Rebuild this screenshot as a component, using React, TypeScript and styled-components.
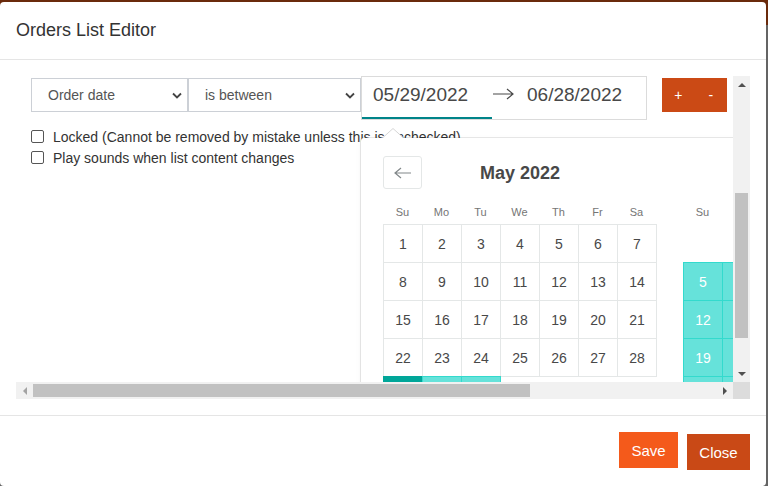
import React from 'react';
import styled, { createGlobalStyle } from 'styled-components';

const GlobalStyle = createGlobalStyle`
  html, body { margin: 0; padding: 0; }
  body {
    width: 768px;
    height: 486px;
    overflow: hidden;
    background: linear-gradient(#6a2a0c 0, #6a2a0c 25px, #646464 25px);
    font-family: "Liberation Sans", Arial, sans-serif;
  }
`;

const Page = styled.div`
  padding-top: 2px;
`;

const Modal = styled.div`
  width: 766px;
  height: 484px;
  background: #fff;
  border-radius: 4px;
  display: flex;
  flex-direction: column;
`;

const Header = styled.div`
  height: 59px;
  padding: 0 16px;
  display: flex;
  align-items: center;
  border-bottom: 1px solid #e5e5e5;
  font-size: 18px;
  color: #333;
`;

const Body = styled.div`
  padding: 16px;
  border-bottom: 1px solid #e5e5e5;
`;

const ScrollFrame = styled.div`
  display: grid;
  grid-template-columns: 717px 17px;
  grid-template-rows: 306px 17px;
`;

const Viewport = styled.div`
  overflow: hidden;
  position: relative;
  padding-left: 15px;
`;

const VBar = styled.div`
  background: #f1f1f1;
  display: flex;
  flex-direction: column;
`;

const HBar = styled.div`
  background: #f1f1f1;
  display: flex;
`;

const Corner = styled.div`
  background: #dcdcdc;
`;

const ArrowBtn = styled.div`
  width: 17px;
  height: 17px;
  flex-shrink: 0;
  display: flex;
  align-items: center;
  justify-content: center;
`;

const Tri = styled.span<{ $dir: 'up' | 'down' | 'left' | 'right'; $muted?: boolean }>`
  width: 0;
  height: 0;
  ${({ $dir, $muted }) => {
    const c = $muted ? '#a3a3a3' : '#505050';
    if ($dir === 'up') return `border-left: 4px solid transparent; border-right: 4px solid transparent; border-bottom: 4px solid ${c};`;
    if ($dir === 'down') return `border-left: 4px solid transparent; border-right: 4px solid transparent; border-top: 4px solid ${c};`;
    if ($dir === 'left') return `border-top: 4px solid transparent; border-bottom: 4px solid transparent; border-right: 4px solid ${c};`;
    return `border-top: 4px solid transparent; border-bottom: 4px solid transparent; border-left: 4px solid ${c};`;
  }}
`;

const Track = styled.div`
  flex: 1;
  display: flex;
`;

const VThumb = styled.div<{ $offset: number; $size: number }>`
  margin: ${p => p.$offset}px 2px 0;
  width: 13px;
  height: ${p => p.$size}px;
  background: #c1c1c1;
`;

const HThumb = styled.div<{ $offset: number; $size: number }>`
  margin: 2px 0 2px ${p => p.$offset}px;
  width: ${p => p.$size}px;
  background: #c1c1c1;
`;

const FilterRow = styled.div`
  display: flex;
  align-items: flex-start;
  width: max-content;
`;

const SelectBox = styled.div<{ $w: number }>`
  width: ${p => p.$w}px;
  height: 34px;
  box-sizing: border-box;
  margin-top: 2px;
  border: 1px solid #ccd0d6;
  padding: 0 5px 0 16px;
  display: flex;
  align-items: center;
  justify-content: space-between;
  font-size: 14px;
  color: #555;
  background: #fff;
`;

const DateRange = styled.div`
  position: relative;
  display: flex;
  align-items: flex-start;
  border: 1px solid #dbdbdb;
  background: #fff;
`;

const DateInput = styled.div<{ $active?: boolean }>`
  width: 130px;
  box-sizing: border-box;
  padding: 6px 11px 10px;
  line-height: 24px;
  font-size: 19px;
  color: #484848;
  border-bottom: 2px solid ${p => (p.$active ? '#008489' : 'transparent')};
`;

const RangeArrow = styled.div`
  width: 24px;
  height: 42px;
  display: flex;
  align-items: center;
  margin-top: -4px;
`;

const Fang = styled.svg`
  position: absolute;
  top: 51px;
  left: 21px;
  z-index: 6;
`;

const Popup = styled.div`
  position: absolute;
  top: 61px;
  left: -1px;
  width: 619px;
  height: 320px;
  background: #fff;
  border-radius: 3px;
  box-shadow: 0 0 0 1px rgba(0, 0, 0, 0.09), 0 2px 6px rgba(0, 0, 0, 0.05);
  z-index: 5;
  display: flex;
  padding: 0 9px;
  box-sizing: border-box;
`;

const NavButton = styled.div`
  position: absolute;
  top: 18px;
  left: 22px;
  width: 39px;
  height: 33px;
  box-sizing: border-box;
  border: 1px solid #e4e7e7;
  border-radius: 3px;
  display: flex;
  align-items: center;
  justify-content: center;
`;

const Month = styled.div`
  width: 300px;
  flex-shrink: 0;
  box-sizing: border-box;
  padding: 22px 13px 0;
`;

const Caption = styled.div`
  line-height: 26px;
  font-size: 18px;
  font-weight: bold;
  color: #484848;
  text-align: center;
  margin-bottom: 17px;
`;

const WeekHeader = styled.div`
  display: grid;
  grid-template-columns: repeat(7, 39px);
  height: 18px;
  line-height: 18px;
  margin-bottom: 3px;
  font-size: 11px;
  color: #757575;
  text-align: center;
`;

const DayGrid = styled.div`
  display: grid;
  grid-template-columns: repeat(7, 39px);
  grid-auto-rows: 38px;
`;

type DayKind = 'plain' | 'empty' | 'selected' | 'range';

const Day = styled.div<{ $kind: DayKind }>`
  width: 40px;
  height: 39px;
  box-sizing: border-box;
  display: flex;
  align-items: center;
  justify-content: center;
  font-size: 14px;
  color: #484848;
  border: 1px solid #e4e7e7;
  ${({ $kind }) =>
    $kind === 'empty'
      ? 'border-color: transparent;'
      : $kind === 'selected'
      ? 'background: #00a699; border-color: #00a699; color: #fff;'
      : $kind === 'range'
      ? 'background: #66e2da; border-color: #33dacd; color: #fff;'
      : ''}
`;

const PlusMinus = styled.div`
  display: flex;
  margin: 2px 0 0 15px;
`;

const SmallButton = styled.button`
  width: 32.5px;
  height: 34px;
  border: none;
  padding: 0;
  background: #cb4a15;
  color: #fff;
  font-family: inherit;
  font-size: 14px;
`;

const Options = styled.div`
  margin-top: 6px;
`;

const CheckRow = styled.label`
  display: flex;
  align-items: center;
  gap: 9px;
  height: 21px;
  font-size: 14px;
  color: #333;
  white-space: nowrap;
`;

const CheckBox = styled.span`
  width: 13px;
  height: 13px;
  box-sizing: border-box;
  border: 1px solid #555;
  border-radius: 2px;
  background: #fff;
  flex-shrink: 0;
`;

const Footer = styled.div`
  flex: 1;
  display: flex;
  justify-content: flex-end;
  align-items: flex-start;
  gap: 9px;
  padding: 16px;
`;

const FooterButton = styled.button<{ $variant: 'save' | 'close' }>`
  height: 36px;
  border: none;
  color: #fff;
  font-family: inherit;
  font-size: 15px;
  padding: 0;
  width: ${p => (p.$variant === 'save' ? 59 : 63)}px;
  margin-top: ${p => (p.$variant === 'save' ? 0 : 2)}px;
  background: ${p => (p.$variant === 'save' ? '#f45a1b' : '#c94916')};
`;

const Chevron = () => (
  <svg width="10" height="7" viewBox="0 0 10 7">
    <path d="M1 1.5 L5 5.5 L9 1.5" fill="none" stroke="#444" strokeWidth="1.8" />
  </svg>
);

const LongArrow = ({ color, w }: { color: string; w: number }) => (
  <svg width={w} height="12" viewBox={`0 0 ${w} 12`}>
    <path d={`M1 6 H${w - 1} M${w - 7} 1 L${w - 1} 6 L${w - 7} 11`} fill="none" stroke={color} strokeWidth="1.2" />
  </svg>
);

const BackArrow = () => (
  <svg width="18" height="12" viewBox="0 0 18 12">
    <path d="M17 6 H1 M7 1 L1 6 L7 11" fill="none" stroke="#82888a" strokeWidth="1.2" />
  </svg>
);

type Cell = number | null;

const may: Cell[] = [
  ...Array.from({ length: 31 }, (_, i) => i + 1),
  null, null, null, null,
];
const june: Cell[] = [
  null, null, null,
  ...Array.from({ length: 30 }, (_, i) => i + 1),
  null, null,
];

const weekdays = ['Su', 'Mo', 'Tu', 'We', 'Th', 'Fr', 'Sa'];

const kindOf = (month: 5 | 6, d: Cell): DayKind => {
  if (d === null) return 'empty';
  if (month === 5) return d === 29 ? 'selected' : d > 29 ? 'range' : 'plain';
  return d === 28 ? 'selected' : d < 28 ? 'range' : 'plain';
};

const CalendarMonth = ({ title, days, month }: { title: string; days: Cell[]; month: 5 | 6 }) => (
  <Month>
    <Caption>{title}</Caption>
    <WeekHeader>
      {weekdays.map(w => (
        <span key={w}>{w}</span>
      ))}
    </WeekHeader>
    <DayGrid>
      {days.map((d, i) => (
        <Day key={i} $kind={kindOf(month, d)}>
          {d}
        </Day>
      ))}
    </DayGrid>
  </Month>
);

const App: React.FC = () => {
  return (
    <Page>
      <GlobalStyle />
      <Modal>
        <Header>Orders List Editor</Header>
        <Body>
          <ScrollFrame>
            <Viewport>
              <FilterRow>
                <SelectBox $w={157}>
                  <span>Order date</span>
                  <Chevron />
                </SelectBox>
                <SelectBox $w={173}>
                  <span>is between</span>
                  <Chevron />
                </SelectBox>
                <DateRange>
                  <DateInput $active>05/29/2022</DateInput>
                  <RangeArrow>
                    <LongArrow color="#484848" w={22} />
                  </RangeArrow>
                  <DateInput>06/28/2022</DateInput>
                  <Fang width="20" height="11" viewBox="0 0 20 11">
                    <polygon points="0,9.5 10,0.5 20,9.5 20,11 0,11" fill="#fff" />
                    <polyline points="0,9.5 10,0.5 20,9.5" fill="none" stroke="#d6d6d6" strokeWidth="1" />
                  </Fang>
                  <Popup>
                    <NavButton>
                      <BackArrow />
                    </NavButton>
                    <CalendarMonth title="May 2022" days={may} month={5} />
                    <CalendarMonth title="June 2022" days={june} month={6} />
                  </Popup>
                </DateRange>
                <PlusMinus>
                  <SmallButton>+</SmallButton>
                  <SmallButton>-</SmallButton>
                </PlusMinus>
              </FilterRow>
              <Options>
                <CheckRow>
                  <CheckBox />
                  Locked (Cannot be removed by mistake unless this is unchecked)
                </CheckRow>
                <CheckRow>
                  <CheckBox />
                  Play sounds when list content changes
                </CheckRow>
              </Options>
            </Viewport>
            <VBar>
              <ArrowBtn>
                <Tri $dir="up" />
              </ArrowBtn>
              <Track>
                <VThumb $offset={100} $size={145} />
              </Track>
              <ArrowBtn>
                <Tri $dir="down" />
              </ArrowBtn>
            </VBar>
            <HBar>
              <ArrowBtn>
                <Tri $dir="left" $muted />
              </ArrowBtn>
              <Track>
                <HThumb $offset={0} $size={497} />
              </Track>
              <ArrowBtn>
                <Tri $dir="right" />
              </ArrowBtn>
            </HBar>
            <Corner />
          </ScrollFrame>
        </Body>
        <Footer>
          <FooterButton $variant="save">Save</FooterButton>
          <FooterButton $variant="close">Close</FooterButton>
        </Footer>
      </Modal>
    </Page>
  );
};

export default App;
